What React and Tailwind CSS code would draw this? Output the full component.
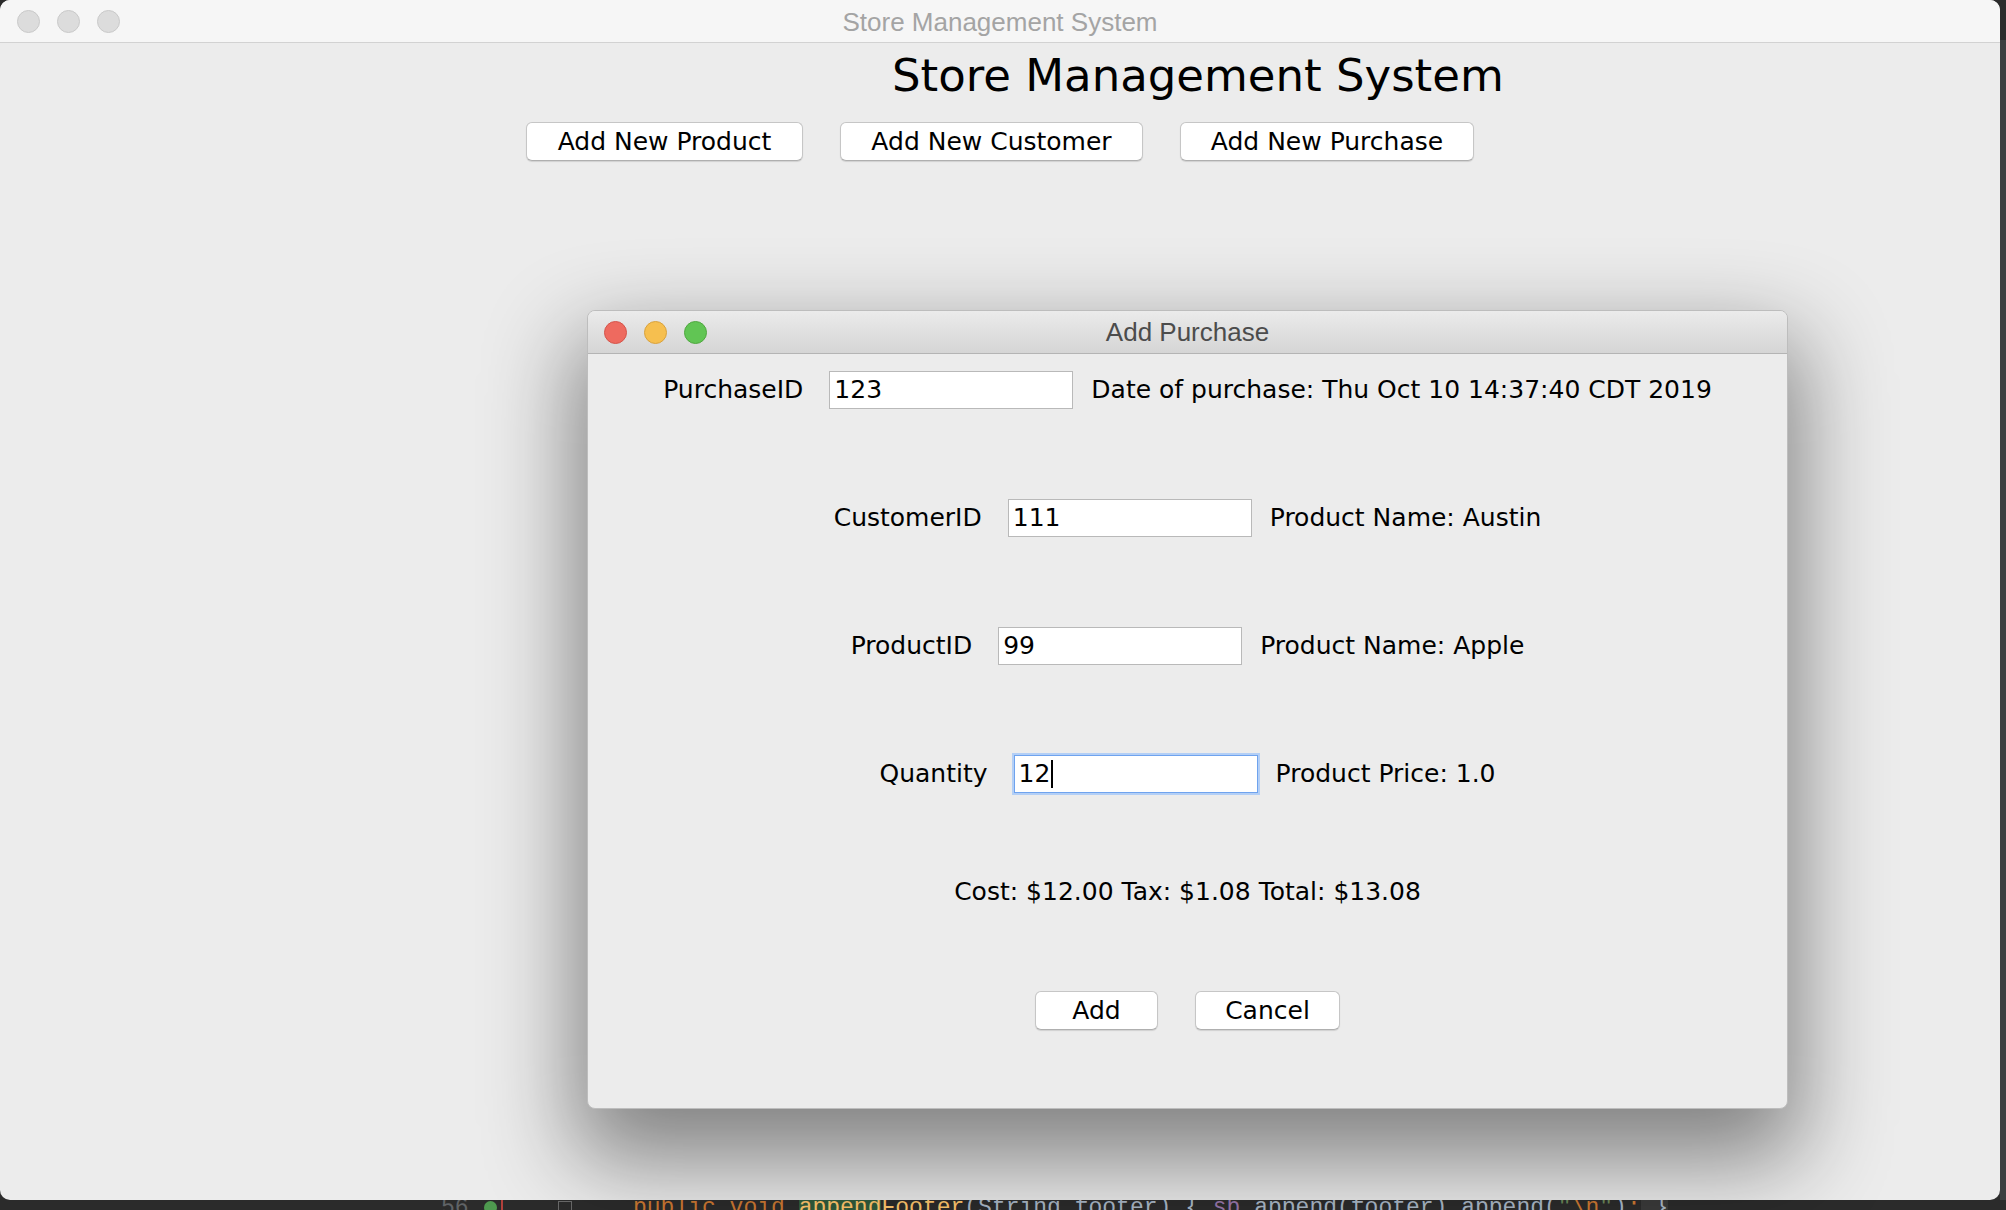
import React from "react";

const trafficGray = "w-[23px] h-[23px] rounded-full bg-[#dcdcdc] border border-[#c9c9c9]";

function MacButton({ children, w }) {
  return (
    <div
      className={`${w} h-[39px] flex items-center justify-center bg-white rounded-[6px] border border-[#c6c6c6] border-b-[#afafaf] shadow-[0_1px_1px_rgba(0,0,0,0.12)] text-[25px] text-black`}
    >
      {children}
    </div>
  );
}

function FieldRow({ label, value, info, focused, className }) {
  return (
    <div className={`flex h-[38px] items-center justify-center ${className || ""}`}>
      <span className="mr-[26px]">{label}</span>
      {focused ? (
        <div className="w-[244px] h-[38px] bg-white border border-[#6fa3ee] shadow-[0_0_0_2px_#b3cff6] flex items-center pl-[4px]">
          <span>{value}</span>
          <span className="w-[2px] h-[28px] bg-black ml-[1px]" />
        </div>
      ) : (
        <div className="w-[244px] h-[38px] bg-white border border-[#b9b9b9] flex items-center pl-[4px]">
          {value}
        </div>
      )}
      <span className="ml-[18px]">{info}</span>
    </div>
  );
}

function CodeStrip() {
  // the IDE peeking out under the window, only the tops of the glyphs show
  return (
    <div className="absolute left-0 top-[1197px] w-[2006px] h-[30px] font-['Liberation_Mono',monospace] text-[23px] leading-[23px] whitespace-pre">
      <span className="absolute left-[441px] text-[#606366]">56</span>
      <span className="absolute left-[484px] top-[4px] w-[13px] h-[13px] rounded-full bg-[#4e9a4f]" />
      <span className="absolute left-[501px] top-0 w-[2px] h-[30px] bg-[#b2413c]" />
      <span className="absolute left-[558px] top-[4px] w-[14px] h-[14px] border border-[#6a6a6a]" />
      <span className="absolute left-[633px]">
        <span className="text-[#cc7832]">public void </span>
        <span className="text-[#ffc66d] bg-[#2f5b3c]">append</span>
        <span className="text-[#ffc66d]">Footer</span>
        <span className="text-[#a9b7c6]">(String footer) {"{"} </span>
        <span className="text-[#9876aa]">sb</span>
        <span className="text-[#a9b7c6]">.append(footer).append(</span>
        <span className="text-[#6a8759]">"</span>
        <span className="text-[#cc7832]">\n</span>
        <span className="text-[#6a8759]">"</span>
        <span className="text-[#a9b7c6]">)</span>
        <span className="text-[#cc7832]">;</span>
        <span className="text-[#a9b7c6] bg-[#3a3a3a]"> {"}"}</span>
      </span>
    </div>
  );
}

export default function App() {
  return (
    <div className="relative w-[2006px] h-[1210px] overflow-hidden bg-[#2b2b2b] font-['DejaVu_Sans',sans-serif] text-black">
      <CodeStrip />
      <div className="absolute right-0 top-[40px] w-[6px] h-[1160px] bg-[#3c3f41]" />

      {/* main window */}
      <div className="absolute left-0 top-0 w-[2000px] h-[1200px] rounded-[10px] overflow-hidden bg-[#ececec] flex flex-col">
        <div className="relative h-[43px] shrink-0 bg-[#f6f6f6] border-b border-[#d2d2d2] flex items-center">
          <div className="flex gap-[17px] pl-[17px]">
            <div className={trafficGray} />
            <div className={trafficGray} />
            <div className={trafficGray} />
          </div>
          <div className="absolute inset-0 pt-[3px] flex items-center justify-center font-['Liberation_Sans',sans-serif] text-[26px] text-[#a4a4a4]">
            Store Management System
          </div>
        </div>

        <div className="pl-[892px] pt-[7px] text-[45px] leading-[52px]">Store Management System</div>

        <div className="flex justify-center gap-[37px] mt-[20px]">
          <MacButton w="w-[277px]">Add New Product</MacButton>
          <MacButton w="w-[303px]">Add New Customer</MacButton>
          <MacButton w="w-[294px]">Add New Purchase</MacButton>
        </div>
      </div>

      {/* Add Purchase dialog */}
      <div className="absolute left-[587px] top-[310px] w-[1201px] h-[799px] rounded-[8px] overflow-hidden border border-[#bdbdbd] bg-[#ececec] shadow-[0_40px_90px_12px_rgba(0,0,0,0.45)] flex flex-col text-[25px]">
        <div className="relative h-[43px] shrink-0 bg-gradient-to-b from-[#ebebeb] to-[#d5d5d5] border-b border-[#b4b4b4] flex items-center">
          <div className="flex gap-[17px] pl-[16px]">
            <div className="w-[23px] h-[23px] rounded-full bg-[#ee6a5f] border border-[#d5544a]" />
            <div className="w-[23px] h-[23px] rounded-full bg-[#f6bf4f] border border-[#d9a23d]" />
            <div className="w-[23px] h-[23px] rounded-full bg-[#61c554] border border-[#4fa83f]" />
          </div>
          <div className="absolute inset-0 flex items-center justify-center font-['Liberation_Sans',sans-serif] text-[26px] text-[#4c4c4c]">
            Add Purchase
          </div>
        </div>

        <div className="flex flex-col pt-[17px]">
          <FieldRow label="PurchaseID" value="123" info="Date of purchase: Thu Oct 10 14:37:40 CDT 2019" />
          <FieldRow className="mt-[90px]" label="CustomerID" value="111" info="Product Name: Austin" />
          <FieldRow className="mt-[90px]" label="ProductID" value="99" info="Product Name: Apple" />
          <FieldRow className="mt-[90px]" label="Quantity" value="12" info="Product Price: 1.0" focused />
          <div className="mt-[80px] h-[38px] flex items-center justify-center">
            Cost: $12.00 Tax: $1.08 Total: $13.08
          </div>
          <div className="mt-[80px] flex justify-center gap-[37px]">
            <MacButton w="w-[123px]">Add</MacButton>
            <MacButton w="w-[145px]">Cancel</MacButton>
          </div>
        </div>
      </div>
    </div>
  );
}
